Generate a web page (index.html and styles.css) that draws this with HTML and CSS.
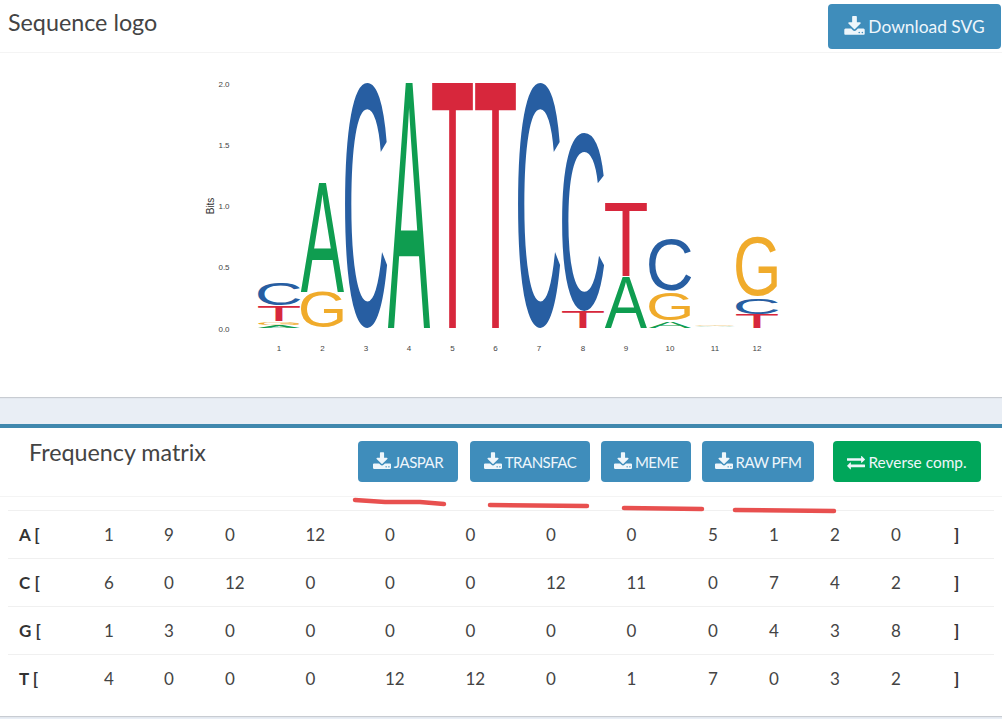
FILE: index.html
```html
<!DOCTYPE html>
<html lang="en">
<head>
    <meta charset="UTF-8">
    <meta name="viewport" content="width=device-width, initial-scale=1.0">
    <title>Sequence logo</title>
    <link rel="stylesheet" href="styles.css">
</head>
<body>
    <svg class="defs">
        <symbol id="icon-download" viewBox="0 0 1664 1792">
            <path d="M1280 1344q0-26-19-45t-45-19-45 19-19 45 19 45 45 19 45-19 19-45zm256 0q0-26-19-45t-45-19-45 19-19 45 19 45 45 19 45-19 19-45zm128-224v320q0 40-28 68t-68 28h-1472q-40 0-68-28t-28-68v-320q0-40 28-68t68-28h465l135 136q58 56 136 56t136-56l136-136h464q40 0 68 28t28 68zm-325-569q17 41-14 70l-448 448q-18 19-45 19t-45-19l-448-448q-31-29-14-70 17-39 59-39h256v-448q0-26 19-45t45-19h256q26 0 45 19t19 45v448h256q42 0 59 39z"/>
        </symbol>
        <symbol id="icon-exchange" viewBox="0 0 1792 1792">
            <path d="M1792 1184v192q0 13-9.5 22.5t-22.5 9.5h-1376v192q0 13-9.5 22.5t-22.5 9.5q-12 0-24-10l-319-320q-9-9-9-22 0-14 9-23l320-320q9-9 23-9 13 0 22.5 9.5t9.5 22.5v192h1376q13 0 22.5 9.5t9.5 22.5zm0-544q0 14-9 23l-320 320q-9 9-23 9-13 0-22.5-9.5t-9.5-22.5v-192h-1376q-13 0-22.5-9.5t-9.5-22.5v-192q0-13 9.5-22.5t22.5-9.5h1376v-192q0-14 9-23t23-9q12 0 24 10l319 319q9 9 9 23z"/>
        </symbol>
    </svg>

    <section class="box logo-box">
        <div class="box-header logo-header">
            <h3>Sequence logo</h3>
            <a class="btn btn-big"><svg class="icon"><use href="#icon-download"/></svg>Download SVG</a>
        </div>
        <svg id="logo" class="logo" viewBox="201 53 600 344"></svg>
    </section>

    <section class="box matrix-box">
        <div class="box-header matrix-header">
            <h3>Frequency matrix</h3>
            <div class="actions">
                <a class="btn btn-caps btn-jaspar"><svg class="icon"><use href="#icon-download"/></svg>JASPAR</a>
                <a class="btn btn-caps btn-transfac"><svg class="icon"><use href="#icon-download"/></svg>TRANSFAC</a>
                <a class="btn btn-caps btn-meme"><svg class="icon"><use href="#icon-download"/></svg>MEME</a>
                <a class="btn btn-caps btn-raw"><svg class="icon"><use href="#icon-download"/></svg>RAW PFM</a>
                <a class="btn btn-green"><svg class="icon"><use href="#icon-exchange"/></svg>Reverse comp.</a>
            </div>
        </div>

        <table class="matrix">
            <colgroup>
                <col class="w86">
                <col class="w60"><col class="w61"><col class="w80"><col class="w79">
                <col class="w80"><col class="w80"><col class="w80"><col class="w81">
                <col class="w61"><col class="w61"><col class="w61"><col class="w63">
                <col class="w50">
            </colgroup>
            <tbody>
                <tr><th>A [</th><td>1</td><td>9</td><td>0</td><td>12</td><td>0</td><td>0</td><td>0</td><td>0</td><td>5</td><td>1</td><td>2</td><td>0</td><th>]</th></tr>
                <tr><th>C [</th><td>6</td><td>0</td><td>12</td><td>0</td><td>0</td><td>0</td><td>12</td><td>11</td><td>0</td><td>7</td><td>4</td><td>2</td><th>]</th></tr>
                <tr><th>G [</th><td>1</td><td>3</td><td>0</td><td>0</td><td>0</td><td>0</td><td>0</td><td>0</td><td>0</td><td>4</td><td>3</td><td>8</td><th>]</th></tr>
                <tr><th>T [</th><td>4</td><td>0</td><td>0</td><td>0</td><td>12</td><td>12</td><td>0</td><td>1</td><td>7</td><td>0</td><td>3</td><td>2</td><th>]</th></tr>
            </tbody>
        </table>
    </section>

    <!-- red marker strokes drawn over the screenshot -->
    <svg class="marks" viewBox="0 0 1002 719">
        <path d="M355 500 L385 502 L420 502 L444 504"/>
        <path d="M490 505 L587 506"/>
        <path d="M624 508 L702 509"/>
        <path d="M735 510 L834 511"/>
    </svg>

    <script src="logo.js"></script>
</body>
</html>
```

FILE: styles.css
```css
* {
    box-sizing: border-box;
}

html, body {
    height: 100%;
}

body {
    font-family: 'Lato', 'Open Sans', sans-serif;
    background-color: #e9eef5;
    margin: 0;
    color: #333;
    position: relative;
    overflow: hidden;
}

.defs {
    display: none;
}

.box {
    background-color: #fff;
    box-shadow: 0 1px 1px rgba(0, 0, 0, 0.14);
}

.logo-box {
    height: 397px;
    margin-bottom: 27px;
}

.matrix-box {
    height: 292px;
    border-top: 4px solid #4088ae;
}

.box-header {
    display: flex;
    border-bottom: 1px solid #f4f4f4;
}

h3 {
    margin: 0;
    font-size: 23.3px;
    font-weight: 400;
    color: #444;
}

.logo-header {
    height: 53px;
    justify-content: space-between;
    align-items: flex-start;
    padding: 3px 1px 0 8px;
}

.logo-header h3 {
    line-height: 38px;
}

.logo-header .btn {
    margin-top: 1px;
}

.matrix-header {
    height: 69px;
    padding: 13px 21px 0 29px;
    justify-content: space-between;
    align-items: flex-start;
}

.matrix-header h3 {
    line-height: 22px;
}

.actions {
    display: flex;
    gap: 11px;
}

.btn {
    display: flex;
    align-items: center;
    justify-content: center;
    height: 41px;
    background-color: #3f8dbb;
    color: #eef6fb;
    border-radius: 4px;
    font-size: 15.4px;
}

.btn-caps {
    font-size: 15px;
    letter-spacing: -0.5px;
}

.btn-big {
    width: 173px;
    height: 45px;
    font-size: 17.4px;
}

.btn-big .icon {
    width: 21px;
    height: 22px;
    margin-right: 3px;
}

.btn-jaspar { width: 100px; margin-right: 1px; }
.btn-transfac { width: 120px; }
.btn-meme { width: 90px; }
.btn-raw { width: 112px; margin-right: 8px; }

.btn-green {
    width: 148px;
    background-color: #00a65a;
}

.icon {
    width: 18px;
    height: 20px;
    margin-right: 3px;
    fill: currentColor;
}

.logo {
    display: block;
    width: 600px;
    height: 344px;
    margin: 0 auto;
    overflow: visible;
}

.logo text {
    font-family: 'Liberation Sans', sans-serif;
}

.logo .tick {
    font-size: 8px;
    fill: #444;
    text-anchor: middle;
}

.logo .axis-title {
    font-size: 10px;
    fill: #333;
    text-anchor: middle;
}

.letter {
    font-size: 100px;
}

.letter-A { fill: #0f9d50; }
.letter-C { fill: #275ea2; }
.letter-G { fill: #f0ab2b; }
.letter-T { fill: #d7273c; }
.faint { opacity: 0.5; }

.matrix {
    table-layout: fixed;
    border-collapse: collapse;
    width: 986px;
    margin: 13px 8px 0;
    font-size: 17px;
    color: #444;
}

.matrix tr {
    height: 48px;
    border-top: 1px solid #f0f0f0;
}

.matrix th, .matrix td {
    padding: 0 0 0 10px;
    text-align: left;
}

.matrix th {
    font-weight: 700;
    color: #333;
}

.matrix th:first-child {
    padding-left: 11px;
}

.w50 { width: 50px; }
.w60 { width: 60px; }
.w61 { width: 61px; }
.w63 { width: 63px; }
.w79 { width: 79.5px; }
.w80 { width: 80.5px; }
.w81 { width: 81.5px; }
.w86 { width: 86px; }

.marks {
    position: absolute;
    left: 0;
    top: 0;
    width: 1002px;
    height: 719px;
    pointer-events: none;
}

.marks path {
    fill: none;
    stroke: #e8504f;
    stroke-width: 4.5;
    stroke-linecap: round;
}
```

FILE: logo.js
```js
// ink box of each letter at font-size 100: left, ink width, ink height, overshoot below baseline
const glyphs = {
    A: [0.2, 66.3, 68.8, 0],
    C: [5, 63.3, 70.8, 1],
    G: [5, 67.5, 70.8, 1],
    T: [2, 57, 68.8, 0]
};

// column x, column width, then letters as [letter, top, bottom]
const columns = [
    [258, 42, [["C", 283, 305], ["T", 306, 321], ["G", 322, 325], ["A", 325, 328]]],
    [301, 43, [["A", 183, 292], ["G", 292, 328]]],
    [345, 42, [["C", 83, 328]]],
    [388, 42, [["A", 83, 328]]],
    [432, 41, [["T", 83, 328]]],
    [475, 41, [["T", 83, 328]]],
    [518, 42, [["C", 83, 328]]],
    [562, 42, [["C", 134, 311], ["T", 312, 328]]],
    [605, 42, [["T", 203, 276], ["A", 277, 328]]],
    [649, 42, [["C", 240, 291], ["G", 292, 320], ["A", 322, 328]]],
    [695, 40, [["G", 325, 326], ["A", 326, 327]]],
    [736, 42, [["G", 237, 296], ["C", 298, 314], ["T", 314, 328]]]
];

const logo = document.getElementById("logo");

function addText(cls, content, attrs) {
    const el = document.createElementNS("http://www.w3.org/2000/svg", "text");
    el.setAttribute("class", cls);
    el.textContent = content;
    for (const key in attrs) el.setAttribute(key, attrs[key]);
    logo.appendChild(el);
}

columns.forEach(([x, w, letters], i) => {
    letters.forEach(([name, top, bottom]) => {
        const [left, inkW, inkH, under] = glyphs[name];
        const sx = w / inkW;
        const sy = (bottom - top) / inkH;
        const tx = x - left * sx;
        const ty = bottom - under * sy;
        addText("letter letter-" + name + (bottom - top < 2 ? " faint" : ""), name, {
            transform: `matrix(${sx} 0 0 ${sy} ${tx} ${ty})`
        });
    });
    addText("tick", i + 1, { x: x + w / 2, y: 351 });
});

["0.0", "0.5", "1.0", "1.5", "2.0"].forEach((label, i) => {
    addText("tick", label, { x: 224, y: 331.5 - i * 61.25 });
});

addText("axis-title", "Bits", { transform: "translate(214 206) rotate(-90)" });
```
